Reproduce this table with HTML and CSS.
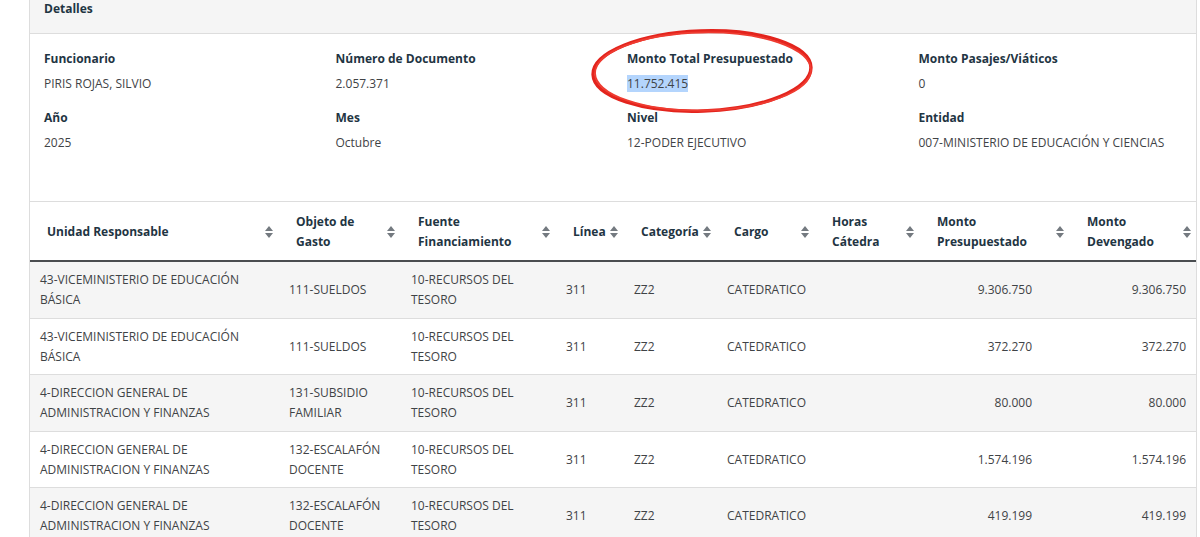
FILE: index.html
```html
<!DOCTYPE html>
<html lang="es">
<head>
<meta charset="utf-8">
<title>Detalles</title>
<link rel="stylesheet" href="styles.css">
</head>
<body>
<div class="page">
  <div class="card">
    <div class="card-header">Detalles</div>
    <div class="details">
      <div class="item"><div class="label">Funcionario</div><div class="value">PIRIS ROJAS, SILVIO</div></div>
      <div class="item"><div class="label">Número de Documento</div><div class="value">2.057.371</div></div>
      <div class="item"><div class="label">Monto Total Presupuestado</div><div class="value"><span class="hl">11.752.415</span></div></div>
      <div class="item"><div class="label">Monto Pasajes/Viáticos</div><div class="value">0</div></div>
      <div class="item"><div class="label">Año</div><div class="value">2025</div></div>
      <div class="item"><div class="label">Mes</div><div class="value">Octubre</div></div>
      <div class="item"><div class="label">Nivel</div><div class="value">12-PODER EJECUTIVO</div></div>
      <div class="item"><div class="label">Entidad</div><div class="value">007-MINISTERIO DE EDUCACIÓN Y CIENCIAS</div></div>
    </div>
    <table class="data">
      <colgroup>
        <col class="c1"><col class="c2"><col class="c3"><col class="c4"><col class="c5"><col class="c6"><col class="c7"><col class="c8"><col class="c9">
      </colgroup>
      <thead>
        <tr>
          <th><div class="th-in"><span>Unidad Responsable</span><svg class="sort" viewBox="0 0 8 12"><path d="M0 5L4 0L8 5Z M0 7L4 12L8 7Z"/></svg></div></th>
          <th><div class="th-in"><span>Objeto de<br>Gasto</span><svg class="sort" viewBox="0 0 8 12"><path d="M0 5L4 0L8 5Z M0 7L4 12L8 7Z"/></svg></div></th>
          <th><div class="th-in"><span>Fuente<br>Financiamiento</span><svg class="sort" viewBox="0 0 8 12"><path d="M0 5L4 0L8 5Z M0 7L4 12L8 7Z"/></svg></div></th>
          <th><div class="th-in"><span>Línea</span><svg class="sort" viewBox="0 0 8 12"><path d="M0 5L4 0L8 5Z M0 7L4 12L8 7Z"/></svg></div></th>
          <th><div class="th-in"><span>Categoría</span><svg class="sort" viewBox="0 0 8 12"><path d="M0 5L4 0L8 5Z M0 7L4 12L8 7Z"/></svg></div></th>
          <th><div class="th-in"><span>Cargo</span><svg class="sort" viewBox="0 0 8 12"><path d="M0 5L4 0L8 5Z M0 7L4 12L8 7Z"/></svg></div></th>
          <th><div class="th-in"><span>Horas<br>Cátedra</span><svg class="sort" viewBox="0 0 8 12"><path d="M0 5L4 0L8 5Z M0 7L4 12L8 7Z"/></svg></div></th>
          <th><div class="th-in"><span>Monto<br>Presupuestado</span><svg class="sort" viewBox="0 0 8 12"><path d="M0 5L4 0L8 5Z M0 7L4 12L8 7Z"/></svg></div></th>
          <th class="last"><div class="th-in"><span>Monto<br>Devengado</span><svg class="sort" viewBox="0 0 8 12"><path d="M0 5L4 0L8 5Z M0 7L4 12L8 7Z"/></svg></div></th>
        </tr>
      </thead>
      <tbody>
        <tr>
          <td>43-VICEMINISTERIO DE EDUCACIÓN BÁSICA</td><td>111-SUELDOS</td><td>10-RECURSOS DEL TESORO</td><td>311</td><td>ZZ2</td><td class="nw">CATEDRATICO</td><td></td><td class="num n1">9.306.750</td><td class="num n2">9.306.750</td>
        </tr>
        <tr>
          <td>43-VICEMINISTERIO DE EDUCACIÓN BÁSICA</td><td>111-SUELDOS</td><td>10-RECURSOS DEL TESORO</td><td>311</td><td>ZZ2</td><td class="nw">CATEDRATICO</td><td></td><td class="num n1">372.270</td><td class="num n2">372.270</td>
        </tr>
        <tr>
          <td>4-DIRECCION GENERAL DE ADMINISTRACION Y FINANZAS</td><td>131-SUBSIDIO FAMILIAR</td><td>10-RECURSOS DEL TESORO</td><td>311</td><td>ZZ2</td><td class="nw">CATEDRATICO</td><td></td><td class="num n1">80.000</td><td class="num n2">80.000</td>
        </tr>
        <tr>
          <td>4-DIRECCION GENERAL DE ADMINISTRACION Y FINANZAS</td><td>132-ESCALAFÓN DOCENTE</td><td>10-RECURSOS DEL TESORO</td><td>311</td><td>ZZ2</td><td class="nw">CATEDRATICO</td><td></td><td class="num n1">1.574.196</td><td class="num n2">1.574.196</td>
        </tr>
        <tr>
          <td>4-DIRECCION GENERAL DE ADMINISTRACION Y FINANZAS</td><td>132-ESCALAFÓN DOCENTE</td><td>10-RECURSOS DEL TESORO</td><td>311</td><td>ZZ2</td><td class="nw">CATEDRATICO</td><td></td><td class="num n1">419.199</td><td class="num n2">419.199</td>
        </tr>
      </tbody>
    </table>
  </div>
  <svg class="annotation" viewBox="0 0 1200 537" aria-hidden="true">
    <ellipse cx="702" cy="71" rx="109" ry="40" transform="rotate(-2 702 71)" class="ring"/>
    <ellipse cx="703" cy="71.5" rx="108" ry="39" transform="rotate(-1 702 71)" class="ring thin"/>
  </svg>
</div>
</body>
</html>
```

FILE: styles.css
```css
* { box-sizing: border-box; }

html {
  overflow: hidden;
}

body {
  margin: 0;
  padding: 0;
  background: #ffffff;
  font-family: "Open Sans", "Liberation Sans", sans-serif;
  font-size: 12px;
  color: #3f4346;
}

.page {
  position: relative;
  display: flow-root;
  width: 1200px;
  padding-left: 29px;
}

.card {
  width: 1168px;
  margin-top: -16px;
  border: 1px solid #dddddd;
  background: #ffffff;
}

.card-header {
  background: #f5f5f5;
  border-bottom: 1px solid #dddddd;
  padding: 14px 14px;
  line-height: 20px;
  font-weight: 700;
  color: #1f3543;
}

.details {
  display: grid;
  grid-template-columns: repeat(4, 1fr);
  row-gap: 14px;
  padding: 15px 0 48px;
}

.item {
  padding-left: 14px;
}

.label {
  font-weight: 700;
  line-height: 20px;
  color: #1f3543;
}

.value {
  margin-top: 5px;
  line-height: 20px;
  color: #3f4346;
}

.hl {
  background: #b4d5fd;
}

.data {
  width: 100%;
  table-layout: fixed;
  border-collapse: collapse;
}

.c1 { width: 249px; }
.c2 { width: 122px; }
.c3 { width: 155px; }
.c4 { width: 68px; }
.c5 { width: 93px; }
.c6 { width: 98px; }
.c7 { width: 105px; }
.c8 { width: 150px; }
.c9 { width: 126px; }

.data th {
  border-top: 1px solid #dddddd;
  border-bottom: 2px solid #4a4d50;
  padding: 10px 6px 8px 17px;
  text-align: left;
  font-weight: 700;
  line-height: 20px;
  color: #1f3543;
  vertical-align: middle;
}

.data th.last {
  padding-right: 5px;
}

.th-in {
  display: flex;
  align-items: center;
  justify-content: space-between;
  gap: 4px;
}

.sort {
  flex: none;
  width: 8px;
  height: 12px;
  fill: #747a80;
}

.data td {
  padding: 8px 10px 7.5px;
  line-height: 20px;
  vertical-align: middle;
  border-top: 1px solid #dddddd;
  color: #3f4346;
}

.data tbody tr:first-child td {
  border-top: none;
}

.data tbody tr:nth-child(odd) td {
  background: #f5f5f5;
}

.nw { white-space: nowrap; }

.num { text-align: right; }
.n1 { padding-right: 38px !important; }
.n2 { padding-right: 10px !important; }

.annotation {
  position: absolute;
  left: 0;
  top: 0;
  width: 1200px;
  height: 537px;
  pointer-events: none;
}

.ring {
  fill: none;
  stroke: #e3241d;
  stroke-width: 3.4;
}

.ring.thin {
  stroke-width: 1.8;
  stroke: #ef3b30;
}
```
